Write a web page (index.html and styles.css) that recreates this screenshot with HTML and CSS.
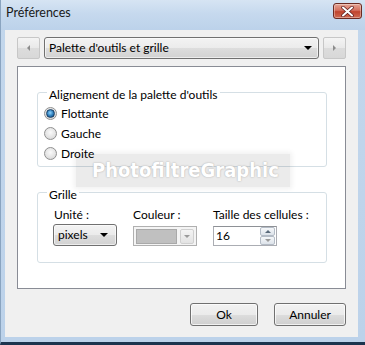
FILE: index.html
```html
<!DOCTYPE html>
<html lang="fr">
<head>
<meta charset="utf-8">
<title>Préférences</title>
<link rel="stylesheet" href="styles.css">
</head>
<body>
<div class="window">
  <div class="titlebar">
    <span class="title">Préférences</span>
    <span class="close">
      <svg width="13" height="11" viewBox="0 0 13 11"><path d="M2 1.5 L11 9.5 M11 1.5 L2 9.5" stroke="#5a1a1a" stroke-width="3.4" stroke-linecap="round"/><path d="M2 1.5 L11 9.5 M11 1.5 L2 9.5" stroke="#ffffff" stroke-width="2" stroke-linecap="round"/></svg>
    </span>
  </div>
  <div class="client">
    <div class="nav">
      <div class="navbtn"><span class="tri tri-left"></span></div>
      <div class="combo main"><span class="combo-text">Palette d'outils et grille</span><span class="caret"></span></div>
      <div class="navbtn"><span class="tri tri-right"></span></div>
    </div>
    <div class="panel">
      <fieldset class="group g1">
        <legend>Alignement de la palette d'outils</legend>
        <label class="radio"><span class="dot checked"></span>Flottante</label>
        <label class="radio"><span class="dot"></span>Gauche</label>
        <label class="radio"><span class="dot"></span>Droite</label>
      </fieldset>
      <fieldset class="group g2">
        <legend>Grille</legend>
        <div class="fields">
          <div class="lbl first">Unité :</div>
          <div class="lbl">Couleur :</div>
          <div class="lbl">Taille des cellules :</div>
          <div class="combo unit"><span class="combo-text">pixels</span><span class="caret"></span></div>
          <div class="colorpick"><span class="swatch"></span><span class="cbtn"><span class="tri tri-down"></span></span></div>
          <div class="spin"><span class="spin-text">16</span><span class="spinbtns"><span class="sb"><span class="tri tri-up"></span></span><span class="sb"><span class="tri tri-down"></span></span></span></div>
        </div>
      </fieldset>
      <div class="watermark">PhotofiltreGraphic</div>
    </div>
    <div class="actions">
      <button class="btn ok">Ok</button>
      <button class="btn cancel">Annuler</button>
    </div>
  </div>
</div>
</body>
</html>
```

FILE: styles.css
```css
* { box-sizing: border-box; }
html, body { margin: 0; padding: 0; }
body {
  width: 365px;
  height: 345px;
  overflow: hidden;
  font-family: Lato, "Noto Sans", sans-serif;
  font-size: 12px;
  color: #000;
}
.window {
  width: 365px;
  height: 345px;
  background: linear-gradient(#c3d7ec, #bcd2ea);
  border-left: 1px solid #8aa4c0;
  border-bottom: 3px solid #1c344e;
  display: flex;
  flex-direction: column;
}
.titlebar {
  height: 30px;
  flex: none;
  display: flex;
  align-items: flex-start;
  justify-content: space-between;
  padding: 6px 3px 0 5px;
  background: linear-gradient(#d6e4f3, #c6d9ee 45%, #bcd2ea);
}
.title {
  font-size: 12.5px;
  line-height: 14px;
  color: #1a1a1a;
}
.close {
  width: 29px;
  height: 16px;
  margin-top: -3px;
  border: 1px solid #6b2a22;
  border-radius: 3px;
  background: linear-gradient(#e5a595, #d4705e 45%, #c0442e 55%, #cf6a52);
  display: flex;
  align-items: center;
  justify-content: center;
  box-shadow: inset 0 0 0 1px rgba(255,255,255,0.35);
}
.client {
  flex: none;
  height: 307px;
  margin: 0 7px 0 4px;
  background: #f0f0f0;
  padding: 7px 12px 0 12px;
  display: flex;
  flex-direction: column;
}
.nav {
  display: flex;
  gap: 4px;
  height: 22px;
}
.navbtn {
  width: 23px;
  height: 22px;
  border: 1px solid #c7c7c7;
  border-radius: 2px;
  background: linear-gradient(#f4f4f4, #e9e9e9 50%, #dcdcdc 51%, #d8d8d8);
  display: flex;
  align-items: center;
  justify-content: center;
}
.tri { width: 0; height: 0; display: block; }
.tri-left { border-top: 3px solid transparent; border-bottom: 3px solid transparent; border-right: 3px solid #8c8c8c; }
.tri-right { border-top: 3px solid transparent; border-bottom: 3px solid transparent; border-left: 3px solid #8c8c8c; }
.tri-down { border-left: 3px solid transparent; border-right: 3px solid transparent; border-top: 3px solid #9a9a9a; }
.tri-up { border-left: 3px solid transparent; border-right: 3px solid transparent; border-bottom: 3px solid #5a6a7a; }
.combo {
  display: flex;
  align-items: center;
  justify-content: space-between;
  border: 1px solid #707070;
  border-radius: 3px;
  background: linear-gradient(#f3f3f3, #ebebeb 50%, #dddddd 51%, #d2d2d2);
  box-shadow: inset 0 0 0 1px rgba(255,255,255,0.6);
}
.combo .caret {
  width: 0; height: 0;
  border-left: 4px solid transparent;
  border-right: 4px solid transparent;
  border-top: 4px solid #000;
}
.main {
  flex: 1;
  height: 22px;
  padding: 0 6px 0 4px;
}
.combo-text { line-height: 14px; }
.panel {
  position: relative;
  margin-top: 7px;
  height: 223px;
  background: #fff;
  border: 1px solid #898c95;
  padding: 15px 18px 0 19px;
}
.group {
  margin: 0;
  border: 1px solid #d5dfe5;
  border-radius: 3px;
  padding: 1px 6px 3px 6px;
  min-width: 0;
}
.group legend {
  padding: 6px 2px 0 2px;
  margin-left: 3px;
  line-height: 14px;
}
.radio {
  display: flex;
  align-items: center;
  height: 20px;
  gap: 4px;
}
.dot {
  width: 13px;
  height: 13px;
  border-radius: 50%;
  border: 1px solid #8f8f8f;
  background: radial-gradient(circle at 50% 40%, #fafafa, #e2e2e2 60%, #cfcfcf);
  display: flex;
  align-items: center;
  justify-content: center;
}
.dot.checked::after {
  content: "";
  width: 7px;
  height: 7px;
  border-radius: 50%;
  background: radial-gradient(circle at 45% 40%, #8fd4ff, #2a7ab8 55%, #14406e);
  border: 1px solid #1b3f63;
}
.g2 {
  margin-top: 15px;
  padding: 6px 6px 16px 6px;
}
.fields {
  display: grid;
  grid-template-columns: 80px 80px auto;
  grid-template-rows: 14px 24px;
  row-gap: 0;
  padding-left: 9px;
}
.lbl { line-height: 14px; }
.lbl.first { padding-left: 1px; }
.unit {
  align-self: end;
  width: 64px;
  height: 22px;
  padding: 0 8px 0 4px;
}
.colorpick {
  align-self: end;
  width: 64px;
  height: 20px;
  border: 1px solid #b0b0b0;
  background: #f4f4f4;
  display: flex;
  align-items: center;
  padding: 0 2px;
  gap: 2px;
}
.swatch {
  width: 43px;
  height: 15px;
  background: #c0c0c0;
  border: 1px solid #a9a9a9;
}
.cbtn {
  width: 14px;
  height: 15px;
  margin-left: 1px;
  border: 1px solid #d0d0d0;
  border-radius: 2px;
  background: linear-gradient(#f4f4f4, #e3e3e3);
  display: flex;
  align-items: center;
  justify-content: center;
}
.spin {
  align-self: end;
  width: 64px;
  height: 20px;
  border: 1px solid #abadb3;
  border-top-color: #8e9196;
  background: #fff;
  display: flex;
  align-items: stretch;
  justify-content: space-between;
}
.spin-text { line-height: 18px; padding-left: 2px; }
.spinbtns {
  display: flex;
  flex-direction: column;
  width: 16px;
  padding: 0 1px 0 0;
}
.sb {
  flex: 1;
  border: 1px solid #b4bcc6;
  border-radius: 2px;
  background: linear-gradient(#f6f8fa, #dde3ea);
  display: flex;
  align-items: center;
  justify-content: center;
}
.watermark {
  position: absolute;
  left: 58px;
  top: 87px;
  width: 214px;
  height: 33px;
  background: rgba(0,0,0,0.08);
  box-shadow: 0 0 5px 2px rgba(0,0,0,0.06);
  font-family: "DejaVu Sans Condensed", "DejaVu Sans", sans-serif;
  font-stretch: condensed;
  font-weight: bold;
  font-size: 20px;
  line-height: 33px;
  padding-left: 16px;
  color: #ffffff;
  text-shadow: 0 0 2px #b5b5b5, 0 0 1px #c5c5c5;
  white-space: nowrap;
  letter-spacing: 0;
}
.actions {
  display: flex;
  justify-content: flex-end;
  gap: 16px;
  margin-top: 14px;
}
.btn {
  height: 23px;
  font-family: inherit;
  font-size: 12px;
  color: #000;
  border: 1px solid #707070;
  border-radius: 3px;
  background: linear-gradient(#f2f2f2, #ebebeb 50%, #dddddd 51%, #cfcfcf);
  box-shadow: inset 0 0 0 1px rgba(255,255,255,0.7);
  padding: 0;
}
.ok { width: 68px; }
.cancel { width: 72px; }
```
